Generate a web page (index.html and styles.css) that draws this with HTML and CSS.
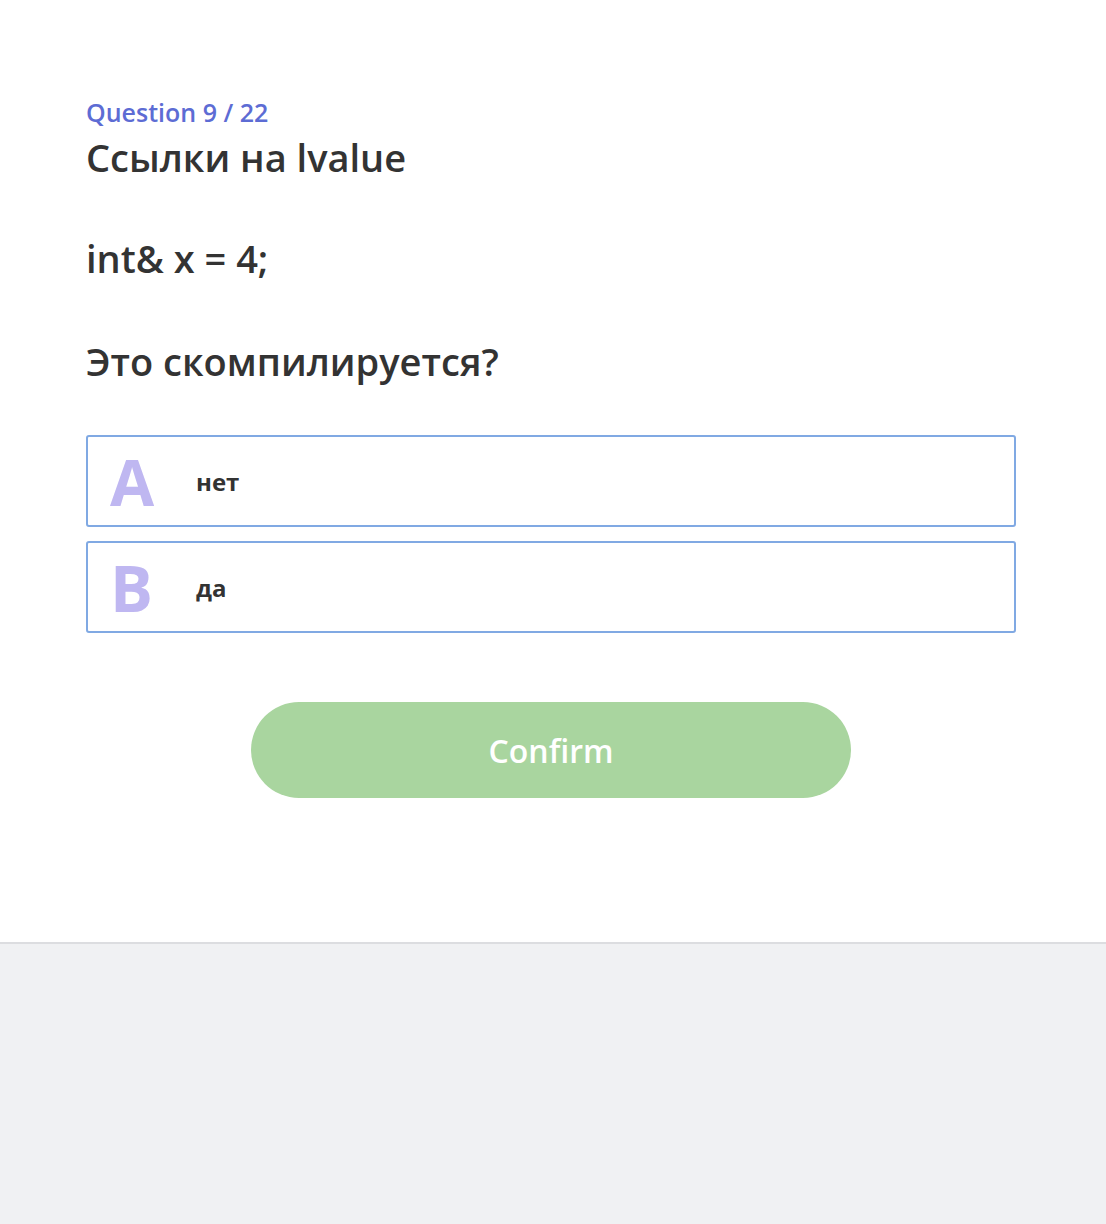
FILE: index.html
```html
<!DOCTYPE html>
<html lang="ru">
<head>
<meta charset="utf-8">
<link rel="stylesheet" href="styles.css">
</head>
<body>
<main class="quiz">
  <div class="counter">Question 9 / 22</div>
  <h1 class="title">Ссылки на lvalue</h1>
  <div class="question">
    <p class="q-line">int&amp; x = 4;</p>
    <p class="q-line">Это скомпилируется?</p>
  </div>
  <div class="options">
    <div class="option"><span class="letter">A</span><span class="answer">нет</span></div>
    <div class="option"><span class="letter">B</span><span class="answer">да</span></div>
  </div>
  <div class="actions">
    <button class="confirm">Confirm</button>
  </div>
</main>
<footer class="footer"></footer>
</body>
</html>
```
FILE: styles.css
```css
html, body {
  margin: 0;
  padding: 0;
  background: #ffffff;
}
body {
  font-family: "Open Sans", "Noto Sans", sans-serif;
  color: #333333;
  min-height: 1224px;
  display: flex;
  flex-direction: column;
}
.quiz {
  padding: 97px 90px 0 86px;
  height: 942px;
  box-sizing: border-box;
}
.counter {
  font-size: 25px;
  font-weight: 600;
  color: #5d6cd4;
  line-height: 30px;
}
.title {
  margin: 7px 0 0;
  font-size: 38px;
  font-weight: 600;
  line-height: 46px;
  color: #333333;
}
.question {
  margin-top: 55px;
  display: flex;
  flex-direction: column;
  gap: 57px;
}
.q-line {
  margin: 0;
  font-size: 38px;
  font-weight: 600;
  line-height: 46px;
}
.options {
  display: flex;
  flex-direction: column;
  gap: 14px;
  margin-top: 51px;
}
.option {
  height: 92px;
  box-sizing: border-box;
  border: 2px solid #80a9e3;
  border-radius: 3px;
  display: flex;
  align-items: center;
}
.letter {
  width: 108px;
  padding-left: 22px;
  box-sizing: border-box;
  font-size: 64px;
  font-weight: 700;
  color: #bfb7f1;
}
.answer {
  font-size: 24px;
  font-weight: 700;
  color: #333333;
}
.actions {
  display: flex;
  justify-content: center;
  margin-top: 69px;
}
.confirm {
  width: 600px;
  height: 96px;
  border: none;
  border-radius: 48px;
  background: #a9d59f;
  color: #ffffff;
  font-family: inherit;
  font-size: 32px;
  font-weight: 600;
}
.footer {
  flex: 1;
  background: #f0f1f3;
  border-top: 2px solid #dcdde0;
}
```
